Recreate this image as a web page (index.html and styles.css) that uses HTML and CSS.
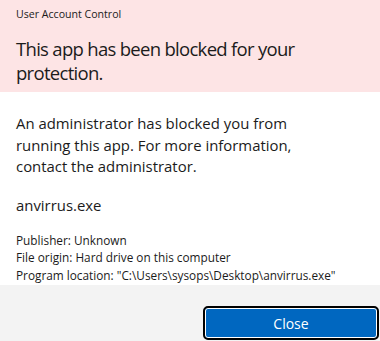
FILE: index.html
```html
<!DOCTYPE html>
<html>
<head>
<meta charset="utf-8">
<link rel="stylesheet" href="styles.css">
</head>
<body>
<div class="dialog">
  <div class="header">
    <div class="caption">User Account Control</div>
    <div class="heading">This app has been blocked for your protection.</div>
  </div>
  <div class="content">
    <p class="message">An administrator has blocked you from running this app. For more information, contact the administrator.</p>
    <p class="file">anvirrus.exe</p>
    <div class="details">
      <div>Publisher: Unknown</div>
      <div>File origin: Hard drive on this computer</div>
      <div>Program location: "C:\Users\sysops\Desktop\anvirrus.exe"</div>
    </div>
  </div>
  <div class="footer">
    <button class="close">Close</button>
  </div>
</div>
</body>
</html>
```
FILE: styles.css
```css
html, body {
  margin: 0;
  padding: 0;
}
body {
  width: 380px;
  height: 341px;
  overflow: hidden;
  font-family: "Open Sans", "Noto Sans", sans-serif;
  color: #1b1b1b;
  background: #ffffff;
}
.dialog {
  display: flex;
  flex-direction: column;
  height: 341px;
}
.header {
  background: #fde4e5;
  padding: 6px 16px 0 16px;
  height: 86px;
}
.caption {
  font-size: 10.6px;
  line-height: 16px;
}
.heading {
  margin-top: 15px;
  font-size: 18.5px;
  line-height: 24px;
  letter-spacing: -0.7px;
  width: 300px;
}
.content {
  padding: 21px 16px 0 16px;
  height: 172px;
}
.message {
  margin: 0;
  font-size: 14.9px;
  line-height: 21.5px;
  width: 300px;
}
.file {
  margin: 17px 0 0 0;
  font-size: 14.9px;
  line-height: 21px;
}
.details {
  margin-top: 16px;
  font-size: 11.8px;
  line-height: 17.5px;
}
.footer {
  flex: 1;
  background: #f3f3f3;
  display: flex;
  justify-content: flex-end;
  align-items: flex-start;
  padding: 21px 1px 0 0;
}
.close {
  width: 176px;
  height: 34px;
  border: 2px solid #000000;
  border-radius: 5px;
  background: #0067c0;
  box-shadow: inset 0 0 0 1px #ffffff;
  color: #ffffff;
  font-family: "Open Sans", "Noto Sans", sans-serif;
  font-size: 14px;
  padding: 0;
}
```
